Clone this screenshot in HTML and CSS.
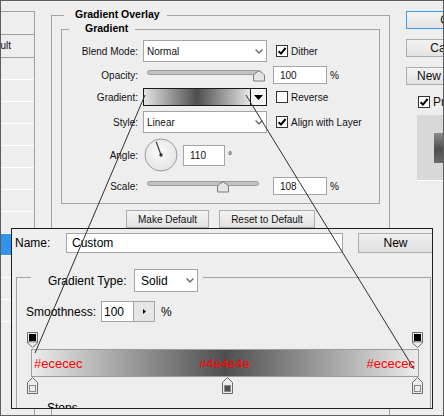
FILE: index.html
```html
<!DOCTYPE html>
<html>
<head>
<meta charset="utf-8">
<link rel="stylesheet" href="styles.css">
</head>
<body>
<div class="frame">
  <div class="dialog">
    <div class="styles-list">
      <div class="list-head"></div>
      <div class="list-row first"><span>Blending Options: Default</span></div>
      <div class="list-row"></div>
      <div class="list-row"></div>
      <div class="list-row"></div>
      <div class="list-row"></div>
      <div class="list-row"></div>
      <div class="list-row"></div>
      <div class="list-row"></div>
      <div class="list-row"></div>
      <div class="list-row selected"></div>
      <div class="list-row"></div>
      <div class="list-row"></div>
      <div class="list-row"></div>
    </div>

    <div class="main">
      <div class="group outer">
        <div class="group-title">Gradient Overlay</div>
        <div class="group inner">
          <div class="group-title">Gradient</div>

          <div class="row r-blend">
            <div class="lbl">Blend Mode:</div>
            <div class="select ctl"><span>Normal</span>
              <svg class="chev" width="8" height="5" viewBox="0 0 8 5"><path d="M0.6 0.6L4 4L7.4 0.6" fill="none" stroke="#6a6a6a" stroke-width="1.4"/></svg>
            </div>
            <div class="chk">
              <svg class="cb" width="12" height="12" viewBox="0 0 12 12"><rect x="0.5" y="0.5" width="11" height="11" fill="#fff" stroke="#333"/><path d="M2.6 6.2L5 8.6L9.6 3" fill="none" stroke="#000" stroke-width="2"/></svg>
              <span>Dither</span>
            </div>
          </div>

          <div class="row r-short">
            <div class="lbl">Opacity:</div>
            <svg class="slider ctl" width="130" height="18" viewBox="0 0 130 18">
              <rect x="4.5" y="4.5" width="113" height="4" rx="2" fill="#c2c2c2" stroke="#9c9c9c"/>
              <path transform="translate(110,4.5)" d="M0.5 10.5V5.5Q0.5 4 2 3L5 0.8Q6 0.2 7 0.8L10 3Q11.5 4 11.5 5.5V10.5Z" fill="#e4e4e4" stroke="#7c7c7c"/>
            </svg>
            <div class="num w54">100</div>
            <span class="pct">%</span>
          </div>

          <div class="row r-short">
            <div class="lbl">Gradient:</div>
            <div class="swatch ctl">
              <div class="sw-grad"></div>
              <div class="sw-arrow"><svg width="9" height="5" viewBox="0 0 9 5"><path d="M0 0H9L4.5 5Z" fill="#000"/></svg></div>
            </div>
            <div class="chk">
              <svg class="cb" width="12" height="12" viewBox="0 0 12 12"><rect x="0.5" y="0.5" width="11" height="11" fill="#fff" stroke="#333"/></svg>
              <span>Reverse</span>
            </div>
          </div>

          <div class="row r-style">
            <div class="lbl">Style:</div>
            <div class="select ctl"><span>Linear</span>
              <svg class="chev" width="8" height="5" viewBox="0 0 8 5"><path d="M0.6 0.6L4 4L7.4 0.6" fill="none" stroke="#6a6a6a" stroke-width="1.4"/></svg>
            </div>
            <div class="chk">
              <svg class="cb" width="12" height="12" viewBox="0 0 12 12"><rect x="0.5" y="0.5" width="11" height="11" fill="#fff" stroke="#333"/><path d="M2.6 6.2L5 8.6L9.6 3" fill="none" stroke="#000" stroke-width="2"/></svg>
              <span>Align with Layer</span>
            </div>
          </div>

          <div class="row r-angle">
            <div class="lbl">Angle:</div>
            <svg class="dial ctl" width="35" height="34" viewBox="0 0 35 34">
              <defs>
                <radialGradient id="dg" cx="0.45" cy="0.4" r="0.65">
                  <stop offset="0" stop-color="#fbfbfb"/>
                  <stop offset="1" stop-color="#e2e2e2"/>
                </radialGradient>
              </defs>
              <circle cx="18" cy="17" r="16" fill="url(#dg)" stroke="#9c9c9c"/>
              <line x1="18" y1="17" x2="13.2" y2="3.8" stroke="#3a3a3a" stroke-width="1.2"/>
              <circle cx="18" cy="17" r="1.7" fill="#333"/>
            </svg>
            <div class="num w42">110</div>
            <span class="deg">°</span>
          </div>

          <div class="row r-short r-scale">
            <div class="lbl">Scale:</div>
            <svg class="slider ctl" width="130" height="18" viewBox="0 0 130 18">
              <rect x="4.5" y="4.5" width="111" height="4" rx="2" fill="#c2c2c2" stroke="#9c9c9c"/>
              <path transform="translate(74,4.5)" d="M0.5 10.5V5.5Q0.5 4 2 3L5 0.8Q6 0.2 7 0.8L10 3Q11.5 4 11.5 5.5V10.5Z" fill="#e4e4e4" stroke="#7c7c7c"/>
            </svg>
            <div class="num w54">108</div>
            <span class="pct">%</span>
          </div>
        </div>

        <div class="btn-row">
          <div class="btn w83">Make Default</div>
          <div class="btn w96">Reset to Default</div>
        </div>
      </div>
    </div>

    <div class="side">
      <div class="sbtn ok">OK</div>
      <div class="sbtn">Cancel</div>
      <div class="sbtn">New Style...</div>
      <div class="side-check">
        <svg class="cb" width="12" height="12" viewBox="0 0 12 12"><rect x="0.5" y="0.5" width="11" height="11" fill="#fff" stroke="#333"/><path d="M2.6 6.2L5 8.6L9.6 3" fill="none" stroke="#000" stroke-width="2"/></svg>
        <span>Preview</span>
      </div>
      <div class="preview"><div class="preview-swatch"></div></div>
    </div>
  </div>

  <div class="editor">
    <div class="name-row">
      <div class="name-lbl">Name:</div>
      <div class="name-input">Custom</div>
      <div class="new-btn">New</div>
    </div>
    <div class="egroup">
      <div class="etitle">
        <span class="etitle-lbl">Gradient Type:</span>
        <div class="eselect"><span>Solid</span>
          <svg width="8" height="5" viewBox="0 0 8 5"><path d="M0.6 0.6L4 4L7.4 0.6" fill="none" stroke="#6a6a6a" stroke-width="1.4"/></svg>
        </div>
      </div>
      <div class="smooth-row">
        <span class="smooth-lbl">Smoothness:</span>
        <div class="smooth-input">100</div>
        <div class="smooth-btn"><svg width="3" height="5" viewBox="0 0 3 5"><path d="M0 0L3 2.5L0 5Z" fill="#000"/></svg></div>
        <span class="smooth-pct">%</span>
      </div>
      <div class="gbar-wrap">
        <div class="stops stops-top">
          <svg class="stop at-start" width="11" height="16" viewBox="0 0 11 16"><path d="M0.5 0.5H10.5V11L5.5 15.5L0.5 11Z" fill="#ececec" stroke="#6b6b6b"/><rect x="2" y="2" width="7" height="7" fill="#000"/><rect x="1" y="9" width="9" height="1.5" fill="#9a9a9a"/></svg>
          <svg class="stop at-end" width="11" height="16" viewBox="0 0 11 16"><path d="M0.5 0.5H10.5V11L5.5 15.5L0.5 11Z" fill="#ececec" stroke="#6b6b6b"/><rect x="2" y="2" width="7" height="7" fill="#000"/><rect x="1" y="9" width="9" height="1.5" fill="#9a9a9a"/></svg>
        </div>
        <div class="gbar">
          <span>#ececec</span>
          <span>#4e4e4e</span>
          <span>#ececec</span>
        </div>
        <div class="stops stops-bottom">
          <svg class="stop at-start" width="11" height="17" viewBox="0 0 11 17"><path d="M0.5 16.5V5.5L5.5 0.5L10.5 5.5V16.5Z" fill="#ececec" stroke="#6b6b6b"/><rect x="2.5" y="8.5" width="6" height="6" fill="#ececec" stroke="#8a8a8a"/></svg>
          <svg class="stop at-mid" width="11" height="17" viewBox="0 0 11 17"><path d="M0.5 16.5V5.5L5.5 0.5L10.5 5.5V16.5Z" fill="#ececec" stroke="#6b6b6b"/><rect x="2.5" y="8.5" width="6" height="6" fill="#4e4e4e" stroke="#8a8a8a"/></svg>
          <svg class="stop at-end" width="11" height="17" viewBox="0 0 11 17"><path d="M0.5 16.5V5.5L5.5 0.5L10.5 5.5V16.5Z" fill="#ececec" stroke="#6b6b6b"/><rect x="2.5" y="8.5" width="6" height="6" fill="#ececec" stroke="#8a8a8a"/></svg>
        </div>
      </div>
      <div class="stops-lbl">Stops</div>
    </div>
  </div>

  <svg class="links" width="444" height="416" viewBox="0 0 444 416">
    <line x1="145" y1="95" x2="35" y2="353" stroke="#2e2e2e" stroke-width="1"/>
    <line x1="246" y1="95" x2="414" y2="369" stroke="#2e2e2e" stroke-width="1"/>
  </svg>
</div>
</body>
</html>
```

FILE: styles.css
```css
* { box-sizing: border-box; margin: 0; padding: 0; }
html, body { background: #eeeeee; }
body { font-family: "Liberation Sans", Arial, sans-serif; font-size: 10px; color: #111; }

.frame { position: relative; width: 444px; height: 416px; border: 1px solid #5e5e5e; background: #eeeeee; overflow: hidden; }
.dialog { display: flex; align-items: flex-start; }

/* styles list */
.styles-list { flex: none; width: 34px; height: 420px; margin-top: 10px; border-top: 1px solid #a0a0a0; border-right: 1px solid #a0a0a0; }
.list-head { height: 23px; border-bottom: 1px solid #a0a0a0; }
.list-row { height: 22px; border-bottom: 1px solid #ffffff; }
.list-row.first { height: 23px; border-bottom: 1px solid #a0a0a0; direction: rtl; text-align: right; padding-right: 23px; line-height: 22px; white-space: nowrap; overflow: hidden; }
.list-row.first span { direction: ltr; unicode-bidi: isolate; }
.list-row.selected { background: #3393ec; }

/* main */
.main { flex: none; margin-left: 16px; margin-top: 14px; }
.group { border: 1px solid #a3a3a3; }
.outer { width: 339px; height: 420px; }
.group-title { width: fit-content; margin-top: -8px; line-height: 13px; font-size: 10.5px; font-weight: bold; background: #eeeeee; color: #000; }
.outer > .group-title { margin-left: 12px; padding: 0 7px 0 11px; }
.inner { margin: 8px 9px 0 9px; padding-bottom: 8px; }
.inner > .group-title { margin-left: 7px; padding: 0 7px 0 16px; }

.row { display: flex; align-items: center; }
.lbl { flex: none; width: 76px; text-align: right; }
.ctl { flex: none; margin-left: 5px; }
.r-blend { margin-top: 5px; height: 22px; }
.r-short { margin-top: 4px; height: 18px; }
.r-style { margin-top: 5px; height: 22px; }
.r-angle { margin-top: 5px; height: 34px; }
.r-scale { margin-top: 5px; }

.select { width: 124px; height: 22px; background: #fff; border: 1px solid #a5a5a5; display: flex; align-items: center; justify-content: space-between; padding: 0 3px 0 3px; }
.chev { display: block; }
.chk { display: flex; align-items: center; margin-left: 9px; }
.cb { display: block; flex: none; }
.chk span { margin-left: 3px; }

.slider { display: block; }
.num { flex: none; height: 18px; background: #fff; border: 1px solid #a5a5a5; display: flex; align-items: center; padding-left: 6px; }
.w54 { width: 54px; }
.w42 { width: 42px; height: 21px; margin-left: 5px; }
.pct { margin-left: 3px; }
.deg { margin-left: 3px; }

.swatch { width: 124px; height: 18px; border: 1px solid #1a1a1a; display: flex; }
.sw-grad { flex: 1; background: linear-gradient(to right, #e4e4e4, #4e4e4e 50%, #e6e6e6); }
.sw-arrow { width: 16px; border-left: 1px solid #1a1a1a; background: #f4f4f4; display: flex; align-items: center; justify-content: center; }
.sw-arrow svg { display: block; }

.btn-row { display: flex; justify-content: center; gap: 10px; margin-top: 6px; }
.btn { height: 18px; border: 1px solid #adadad; background: linear-gradient(#f3f3f3, #e2e2e2); display: flex; align-items: center; justify-content: center; }
.w83 { width: 83px; }
.w96 { width: 96px; }

/* right side */
.side { flex: none; width: 86px; margin-left: 16px; margin-top: 10px; display: flex; flex-direction: column; font-size: 12px; }
.sbtn { height: 18px; border: 1px solid #acacac; background: linear-gradient(#f3f3f3, #e3e3e3); display: flex; align-items: center; justify-content: center; margin-top: 10px; }
.sbtn.ok { margin-top: 0; border-color: #3c9be8; }
.side-check { display: flex; align-items: center; height: 12px; margin-top: 11px; margin-left: 12px; }
.side-check span { margin-left: 3px; }
.preview { width: 70px; height: 66px; margin-top: 7px; margin-left: 11px; background: #d8d8d8; border-bottom: 1px solid #ffffff; padding: 18px 0 0 17px; }
.preview-swatch { width: 30px; height: 30px; background: linear-gradient(to bottom, #8c8c8c, #4e4e4e 55%, #6a6a6a); }

/* gradient editor */
.editor { position: absolute; left: 10px; top: 227px; width: 422px; height: 181px; border: 1px solid #1e1e1e; background: #eeeeee; overflow: hidden; font-size: 12px; color: #000; }
.name-row { display: flex; align-items: center; height: 20px; margin-top: 4px; padding-left: 3px; }
.name-lbl { width: 51px; flex: none; }
.name-input { width: 277px; height: 20px; flex: none; background: #fff; border: 1px solid #a5a5a5; padding-left: 5px; display: flex; align-items: center; }
.new-btn { width: 75px; height: 20px; flex: none; margin-left: 15px; border: 1px solid #adadad; background: linear-gradient(#eeeeee, #e0e0e0); display: flex; align-items: center; justify-content: center; }

.egroup { margin: 24px 1px 0 4px; height: 200px; border: 1px solid #a3a3a3; border-bottom: none; }
.etitle { display: flex; align-items: center; width: fit-content; height: 23px; margin: -9px 0 0 14px; padding: 0 5px 0 17px; background: #eeeeee; }
.etitle-lbl { width: 80px; flex: none; }
.eselect { width: 64px; height: 23px; margin-left: 6px; background: #fff; border: 1px solid #a5a5a5; display: flex; align-items: center; justify-content: space-between; padding: 0 3px 0 6px; }
.eselect svg { display: block; }

.smooth-row { display: flex; align-items: center; height: 21px; margin: 9px 0 0 9px; }
.smooth-lbl { width: 75px; flex: none; }
.smooth-input { width: 33px; height: 21px; background: #fff; border: 1px solid #a5a5a5; padding-left: 2px; display: flex; align-items: center; }
.smooth-btn { width: 22px; height: 21px; margin-left: -1px; border: 1px solid #a5a5a5; background: #e6e6e6; display: flex; align-items: center; justify-content: center; }
.smooth-btn svg { display: block; }
.smooth-pct { margin-left: 6px; }

.gbar-wrap { width: 388px; margin: 10px 0 0 14px; }
.stops { position: relative; }
.stops-top { height: 17px; }
.stops-bottom { height: 17px; }
.stop { position: absolute; top: 0; display: block; }
.at-start { left: -4px; }
.at-mid { left: 191px; }
.at-end { left: 381px; }
.gbar { height: 28px; border: 1px solid #9c9c9c; background: linear-gradient(to right, #ececec, #4e4e4e 50%, #ececec); display: flex; align-items: center; justify-content: space-between; padding: 0 3px 0 2px; color: #ff0000; font-size: 13px; }
.stops-lbl { margin: 7px 0 0 30px; line-height: 14px; }

.links { position: absolute; left: -1px; top: -1px; pointer-events: none; }
```
